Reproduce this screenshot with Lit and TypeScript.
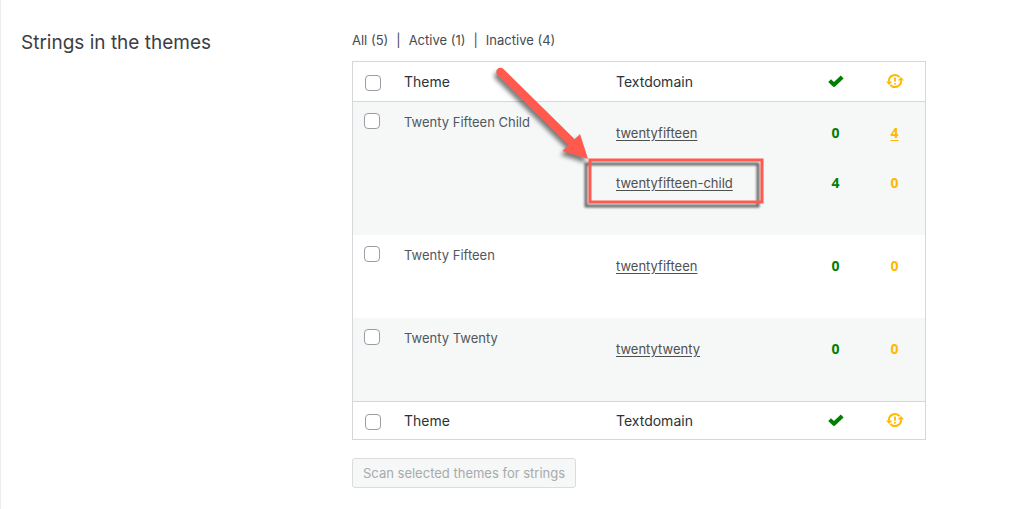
import { LitElement, html, css, svg } from "lit";
import { customElement, state } from "lit/decorators.js";

interface Domain {
  name: string;
  done: number;
  pending: number;
  highlight?: boolean;
}

interface Theme {
  name: string;
  domains: Domain[];
}

const THEMES: Theme[] = [
  {
    name: "Twenty Fifteen Child",
    domains: [
      { name: "twentyfifteen", done: 0, pending: 4 },
      { name: "twentyfifteen-child", done: 4, pending: 0, highlight: true },
    ],
  },
  { name: "Twenty Fifteen", domains: [{ name: "twentyfifteen", done: 0, pending: 0 }] },
  { name: "Twenty Twenty", domains: [{ name: "twentytwenty", done: 0, pending: 0 }] },
];

const checkIcon = svg`
  <svg class="icon" viewBox="0 0 18 18" role="img" aria-label="Translated">
    <path d="M2.6 7.6 7 11.8 15.2 4" fill="none" stroke="#008000" stroke-width="4" stroke-linejoin="round" />
  </svg>`;

const pendingIcon = svg`
  <svg class="icon" viewBox="0 0 18 18" role="img" aria-label="Needs update">
    <g fill="none" stroke="#ffb900" stroke-width="2">
      <path d="M3 8.6A6 6 0 0 1 13.600 4.200" />
      <path d="M15 7.4A6 6 0 0 1 4.400 11.800" />
    </g>
    <path d="M11.600 7.400H18L15 4ZM0 8.600H6.400L3 12Z" fill="#ffb900" />
    <path d="M8.100 4.400H9.900V8.800H8.100ZM8.100 9.900H9.900V11.600H8.100Z" fill="#ffb900" />
  </svg>`;

@customElement("app-root")
export class AppRoot extends LitElement {
  static styles = css`
    :host {
      display: block;
      min-height: 100vh;
      box-sizing: border-box;
      border-left: 1px solid #ececed;
      background: #fff;
      color: #50575e;
      font: 13px/20px Inter, "Liberation Sans", sans-serif;
    }
    .section {
      display: grid;
      grid-template-columns: 331px minmax(0, 1fr);
      padding: 30px 98px 20px 20px;
    }
    h2 {
      margin: 0;
      color: #3c3e42;
      font-size: 19px;
      line-height: 26px;
      font-weight: 400;
    }
    .filters {
      display: flex;
      gap: 8px;
      margin: 0 0 11px;
      color: #444b52;
    }
    a {
      color: inherit;
      text-underline-offset: 2px;
    }
    .filters a {
      text-decoration: none;
    }
    table {
      width: 100%;
      table-layout: fixed;
      border-collapse: separate;
      border-spacing: 0;
      border: 1px solid #d5d8da;
    }
    th,
    td {
      padding: 0;
      text-align: left;
      font-weight: 400;
      vertical-align: top;
    }
    .pick {
      width: 51px;
    }
    .theme {
      width: 212px;
    }
    .count {
      width: 59px;
      text-align: center;
    }
    .last {
      padding-right: 1px;
    }
    thead th,
    tfoot th {
      height: 39px;
      vertical-align: middle;
      color: #2c3338;
      font-size: 14px;
    }
    thead th {
      border-bottom: 1px solid #d5d8da;
    }
    tfoot th {
      height: 37px;
      border-top: 1px solid #d5d8da;
    }
    tbody tr:nth-child(odd) {
      background: #f6f7f7;
    }
    tbody .theme {
      padding-top: 10px;
    }
    tbody .pick {
      padding-top: 11px;
    }
    tbody .pick input {
      margin-left: 11px;
    }
    input {
      appearance: none;
      display: block;
      box-sizing: border-box;
      width: 16px;
      height: 16px;
      margin: 0 0 0 12px;
      border: 1px solid #9a9ea3;
      border-radius: 4px;
      background: #fff;
    }
    thead input,
    tfoot input {
      margin-top: 3px;
    }
    input:checked {
      background: #2271b1;
    }
    .stack {
      display: flex;
      flex-direction: column;
      gap: 30px;
      margin: 0;
      padding: 21px 0 42px;
      list-style: none;
    }
    .domain {
      position: relative;
      color: #50504f;
    }
    .number {
      font-family: "Noto Sans", sans-serif;
      font-size: 14px;
      font-weight: 700;
    }
    .done {
      color: #008000;
    }
    .pending {
      color: #ffb900;
    }
    .icon {
      display: block;
      width: 18px;
      height: 18px;
      margin: 0 auto;
    }
    .callout {
      position: absolute;
      left: -136px;
      top: -113px;
      width: 300px;
      height: 160px;
      pointer-events: none;
    }
    .scan {
      margin-top: 18px;
      padding: 4px 10px;
      border: 1px solid #dcdcde;
      border-radius: 3px;
      background: #f6f7f7;
      color: #a7aaad;
      font: inherit;
    }
  `;

  @state() private selected = new Set<string>();

  private toggle(name: string) {
    const next = new Set(this.selected);
    next.has(name) ? next.delete(name) : next.add(name);
    this.selected = next;
  }

  private toggleAll(event: Event) {
    const on = (event.target as HTMLInputElement).checked;
    this.selected = new Set(on ? THEMES.map((theme) => theme.name) : []);
  }

  private headings() {
    return html`
      <tr>
        <th class="pick">
          <input
            type="checkbox"
            aria-label="Select all themes"
            .checked=${this.selected.size === THEMES.length}
            @change=${this.toggleAll}
          />
        </th>
        <th class="theme">Theme</th>
        <th>Textdomain</th>
        <th class="count">${checkIcon}</th>
        <th class="count last">${pendingIcon}</th>
      </tr>
    `;
  }

  private callout() {
    return html`
      <svg class="callout" viewBox="0 0 300 160" aria-hidden="true">
        <defs>
          <filter id="soft" x="-20%" y="-20%" width="140%" height="140%" color-interpolation-filters="sRGB">
            <feDropShadow dx="-2" dy="4" stdDeviation="2" flood-color="#000" flood-opacity=".5" />
          </filter>
          <filter id="edge" x="-10%" y="-20%" width="120%" height="140%" color-interpolation-filters="sRGB">
            <feDropShadow dx="-4" dy="4" stdDeviation=".8" flood-color="#000" flood-opacity=".58" />
          </filter>
        </defs>
        <rect x="110" y="100" width="172" height="42" fill="none" stroke="#ff5a4d" stroke-width="3" filter="url(#edge)" />
        <g filter="url(#soft)" fill="#ff5a4d">
          <path d="M20.5 12 91 81.5" stroke="#ff5a4d" stroke-width="8.5" stroke-linecap="round" />
          <path d="M108 99 82.500 91 100 74Z" />
        </g>
      </svg>
    `;
  }

  private row(theme: Theme) {
    const id = theme.name.toLowerCase().replace(/ /g, "-");
    return html`
      <tr>
        <td class="pick">
          <input
            type="checkbox"
            id=${id}
            .checked=${this.selected.has(theme.name)}
            @change=${() => this.toggle(theme.name)}
          />
        </td>
        <td class="theme"><label for=${id}>${theme.name}</label></td>
        <td>
          <ul class="stack">
            ${theme.domains.map(
              (d) => html`<li class="domain">
                <a href="#${d.name}">${d.name}</a>${d.highlight ? this.callout() : null}
              </li>`
            )}
          </ul>
        </td>
        <td class="count">
          <ul class="stack number done">
            ${theme.domains.map((d) => html`<li>${d.done}</li>`)}
          </ul>
        </td>
        <td class="count last">
          <ul class="stack number pending">
            ${theme.domains.map(
              (d) => html`<li>${d.pending ? html`<a href="#${d.name}">${d.pending}</a>` : d.pending}</li>`
            )}
          </ul>
        </td>
      </tr>
    `;
  }

  render() {
    return html`
      <section class="section">
        <h2>Strings in the themes</h2>
        <div>
          <nav class="filters">
            <a href="#all">All (5)</a><span>|</span>
            <a href="#active">Active (1)</a><span>|</span>
            <a href="#inactive">Inactive (4)</a>
          </nav>
          <table>
            <thead>${this.headings()}</thead>
            <tbody>${THEMES.map((theme) => this.row(theme))}</tbody>
            <tfoot>${this.headings()}</tfoot>
          </table>
          <button class="scan" type="button" ?disabled=${this.selected.size === 0}>
            Scan selected themes for strings
          </button>
        </div>
      </section>
    `;
  }
}
